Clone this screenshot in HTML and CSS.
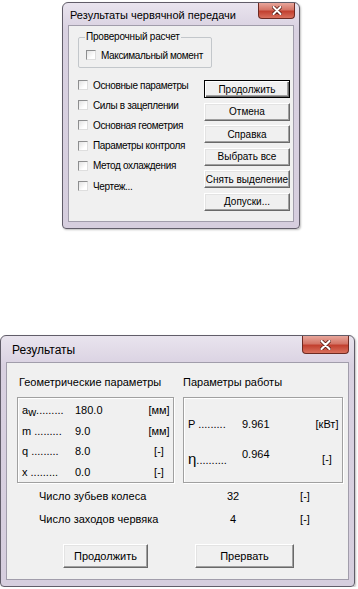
FILE: index.html
```html
<!DOCTYPE html>
<html lang="ru">
<head>
  <meta charset="UTF-8">
  <title>Результаты червячной передачи</title>
  <link rel="stylesheet" href="styles.css">
</head>
<body>

  <div class="page">

    <div class="window dlg-main">
      <div class="titlebar">
        <span class="title">Результаты червячной передачи</span>
        <span class="close">
          <svg width="10" height="9" viewBox="0 0 10 9">
            <path d="M1.5 1 L8.5 8 M8.5 1 L1.5 8" stroke="#5a1a12" stroke-width="3.6" stroke-linecap="round"/>
            <path d="M1.5 1 L8.5 8 M8.5 1 L1.5 8" stroke="#fff" stroke-width="2" stroke-linecap="round"/>
          </svg>
        </span>
      </div>
      <div class="client main-client">
        <fieldset class="group">
          <legend>Проверочный расчет</legend>
          <label class="check"><span class="box"></span>Максимальный момент</label>
        </fieldset>
        <div class="main-body">
          <div class="check-list">
            <label class="check"><span class="box"></span>Основные параметры</label>
            <label class="check"><span class="box"></span>Силы в зацеплении</label>
            <label class="check"><span class="box"></span>Основная геометрия</label>
            <label class="check"><span class="box"></span>Параметры контроля</label>
            <label class="check"><span class="box"></span>Метод охлаждения</label>
            <label class="check"><span class="box"></span>Чертеж...</label>
          </div>
          <div class="btn-col">
            <button class="btn default">Продолжить</button>
            <button class="btn">Отмена</button>
            <button class="btn">Справка</button>
            <button class="btn">Выбрать все</button>
            <button class="btn">Снять выделение</button>
            <button class="btn">Допуски...</button>
          </div>
        </div>
      </div>
    </div>

    <div class="window dlg-results">
      <div class="titlebar">
        <span class="title">Результаты</span>
        <span class="close">
          <svg width="11" height="10" viewBox="0 0 11 10">
            <path d="M1.5 1 L9.5 9 M9.5 1 L1.5 9" stroke="#5a1a12" stroke-width="3.8" stroke-linecap="round"/>
            <path d="M1.5 1 L9.5 9 M9.5 1 L1.5 9" stroke="#fff" stroke-width="2.2" stroke-linecap="round"/>
          </svg>
        </span>
      </div>
      <div class="client res-client">
        <div class="panels">
          <div class="panel">
            <div class="panel-head geo-head">Геометрические параметры</div>
            <div class="box-frame geo">
              <div class="row"><span class="lbl">a<sub>w</sub>.........</span><span class="val">180.0</span><span class="unit">[мм]</span></div>
              <div class="row"><span class="lbl">m .........</span><span class="val">9.0</span><span class="unit">[мм]</span></div>
              <div class="row"><span class="lbl">q .........</span><span class="val">8.0</span><span class="unit">[-]</span></div>
              <div class="row"><span class="lbl">x .........</span><span class="val">0.0</span><span class="unit">[-]</span></div>
            </div>
          </div>
          <div class="panel">
            <div class="panel-head">Параметры работы</div>
            <div class="box-frame work">
              <div class="row"><span class="lbl">P .........</span><span class="val">9.961</span><span class="unit">[кВт]</span></div>
              <div class="row eta"><span class="lbl"><span class="eta-sym">η</span>..........</span><span class="val">0.964</span><span class="unit">[-]</span></div>
            </div>
          </div>
        </div>
        <div class="sum-row"><span class="sum-lbl">Число зубьев колеса</span><span class="sum-val">32</span><span class="sum-unit">[-]</span></div>
        <div class="sum-row"><span class="sum-lbl">Число заходов червяка</span><span class="sum-val">4</span><span class="sum-unit">[-]</span></div>
        <div class="res-buttons">
          <button class="btn big go">Продолжить</button>
          <button class="btn big stop">Прервать</button>
        </div>
      </div>
    </div>

  </div>

</body>
</html>
```

FILE: styles.css
```css
body {
  margin: 0;
  background: #fff;
  color: #000;
  font-family: "Liberation Sans", Arial, sans-serif;
}
.page {
  display: flex;
  flex-direction: column;
  align-items: flex-start;
  padding-top: 2px;
}

/* window frame */
.window {
  box-sizing: border-box;
  display: flex;
  flex-direction: column;
  border: 1px solid #615d69;
  border-radius: 6px 6px 4px 4px;
  background: linear-gradient(#e9e4ee, #d9d1e1 12%, #d6cede);
  padding: 0 5px 6px;
  box-shadow: 1px 1px 2px rgba(0, 0, 0, 0.25);
}
.titlebar {
  display: flex;
  justify-content: space-between;
  align-items: flex-start;
}
.title {
  padding-left: 2px;
}
.close {
  display: flex;
  align-items: center;
  justify-content: center;
  box-sizing: border-box;
  border: 1px solid #6d2a22;
  border-top: none;
  border-radius: 0 0 4px 4px;
  background: linear-gradient(#e8a69b, #d47567 45%, #c2402f 55%, #d9705d);
}
.client {
  box-sizing: border-box;
  flex: 1;
  background: #f0f0f0;
  border: 1px solid #a19dab;
}

/* top dialog */
.dlg-main {
  margin-left: 62px;
  width: 238px;
  height: 227px;
}
.dlg-main .titlebar {
  height: 22px;
}
.dlg-main .title {
  font-size: 11px;
  margin-top: 6px;
}
.dlg-main .close {
  width: 37px;
  height: 16px;
  margin-right: -1px;
}
.main-client {
  font-size: 10px;
  padding: 5px 3px 0 9px;
}
.group {
  box-sizing: border-box;
  width: 134px;
  margin: 0;
  padding: 0 4px 6px 7px;
  border: 1px solid #c3c7cb;
  border-radius: 2px;
}
.group legend {
  padding: 0 1px;
  margin-left: -1px;
  line-height: 12px;
  letter-spacing: -0.2px;
}
.group .check {
  height: 12px;
  margin-top: 6px;
}
.check {
  display: flex;
  align-items: center;
  gap: 5px;
  white-space: nowrap;
  letter-spacing: -0.35px;
}
.box {
  box-sizing: border-box;
  flex: none;
  width: 10px;
  height: 10px;
  border: 1px solid;
  border-color: #8d8e8f #dedede #dedede #8d8e8f;
  background: linear-gradient(135deg, #e2e2e2, #fff 70%);
}
.main-body {
  display: flex;
  justify-content: space-between;
  margin-top: 7px;
}
.check-list {
  display: flex;
  flex-direction: column;
}
.check-list .check {
  height: 20.2px;
}
.btn-col {
  display: flex;
  flex-direction: column;
  gap: 4.5px;
  margin-top: 5px;
}
.btn {
  box-sizing: border-box;
  width: 86px;
  height: 18px;
  padding: 0;
  font-family: inherit;
  font-size: 10px;
  color: #000;
  background: #f0f0f0;
  border: 1px solid;
  border-color: #fff #696969 #696969 #fff;
  box-shadow: inset -1px -1px #a0a0a0, inset 1px 1px #e3e3e3;
  white-space: nowrap;
}
.btn.default {
  border: 1px solid #000;
  box-shadow: inset 1px 1px #fff, inset -1px -1px #696969, inset -2px -2px #a0a0a0;
}

/* bottom dialog */
.dlg-results {
  margin-top: 106px;
  width: 355px;
  height: 252px;
}
.dlg-results .titlebar {
  height: 26px;
}
.dlg-results .title {
  font-size: 12px;
  margin-top: 7px;
  padding-left: 6px;
}
.dlg-results .close {
  width: 47px;
  height: 18px;
}
.res-client {
  font-size: 11px;
  padding: 12px 5px 0 10px;
}
.panels {
  display: flex;
  gap: 9px;
}
.panel-head {
  line-height: 14px;
  margin-bottom: 8px;
}
.geo-head {
  padding-left: 2px;
}
.box-frame {
  box-sizing: border-box;
  height: 86px;
  border: 1px solid #a0a0a0;
  box-shadow: 1px 1px 0 #fff, inset 1px 1px 0 #fff;
}
.row {
  display: flex;
  align-items: center;
  height: 20.5px;
  padding-left: 4px;
}
.lbl {
  white-space: nowrap;
}
.lbl sub {
  font-size: 11px;
  vertical-align: -2px;
  line-height: 0;
}
.unit {
  text-align: center;
}
.geo {
  width: 157px;
  padding-top: 2px;
}
.geo .lbl {
  width: 53px;
}
.geo .val {
  width: 71px;
}
.geo .unit {
  width: 26px;
}
.work {
  width: 160px;
  padding-top: 16px;
}
.work .lbl {
  width: 54px;
}
.work .val {
  width: 70px;
}
.work .unit {
  width: 30px;
}
.row.eta {
  margin-top: 13px;
  align-items: flex-start;
}
.eta .lbl,
.eta .unit {
  margin-top: 5px;
}
.eta-sym {
  font-size: 15px;
  line-height: 12px;
}
.sum-row {
  display: flex;
  align-items: center;
  height: 20px;
  margin-top: 3px;
  padding-left: 22px;
}
.sum-row:first-of-type {
  margin-top: 6px;
}
.sum-lbl {
  width: 174px;
}
.sum-val {
  width: 40px;
  text-align: center;
}
.sum-unit {
  width: 30px;
  margin-left: 37px;
  text-align: center;
}
.res-buttons {
  display: flex;
  gap: 47px;
  margin-top: 15px;
  padding-left: 46px;
}
.btn.big {
  height: 24px;
  font-size: 11px;
}
.btn.go {
  width: 85px;
}
.btn.stop {
  width: 99px;
}
```
